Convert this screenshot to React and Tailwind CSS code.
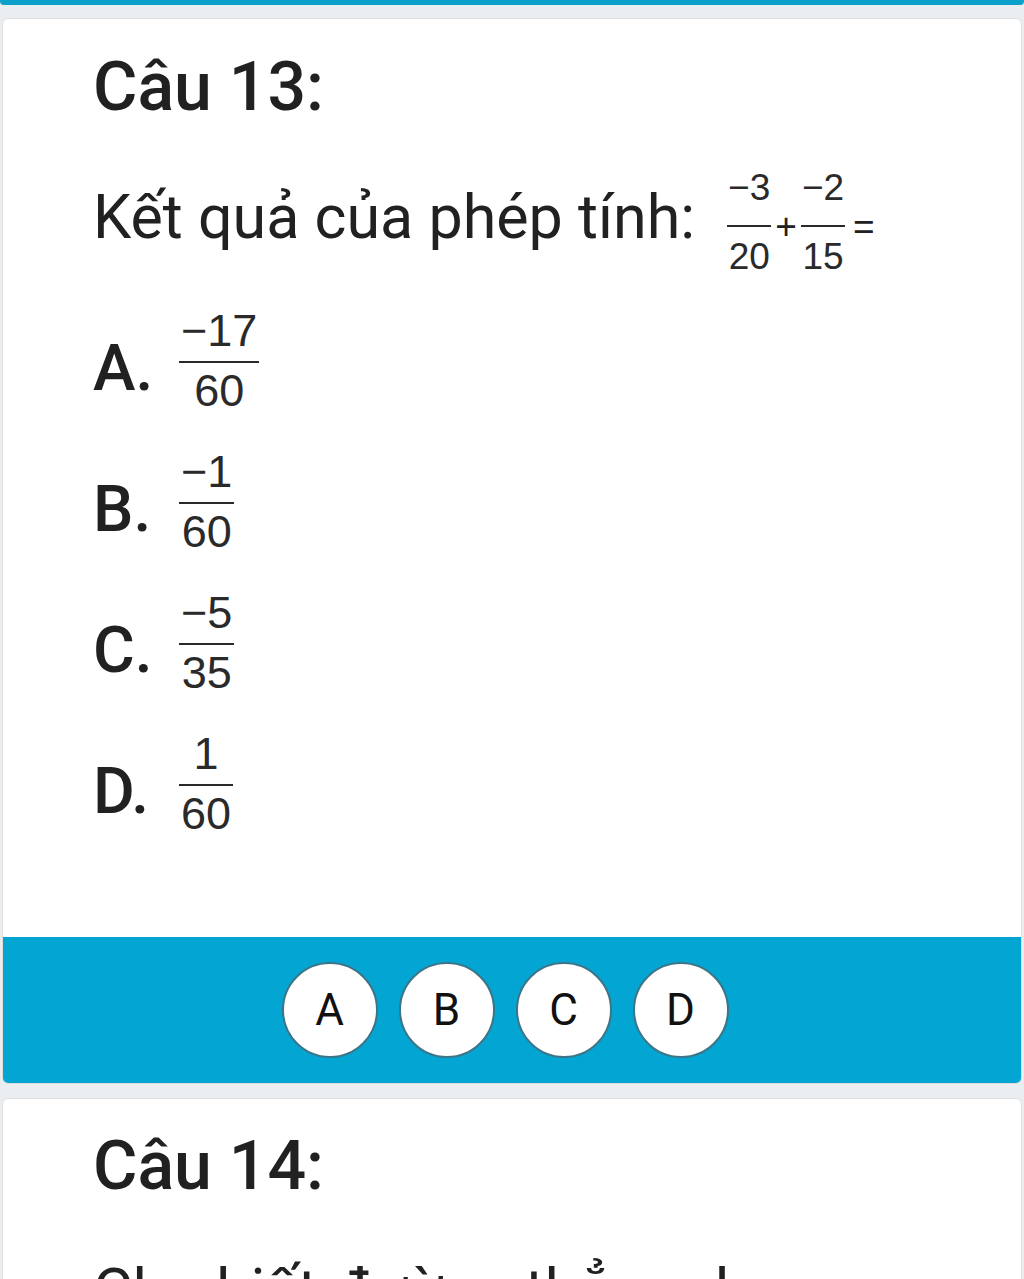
import React from 'react';

const mathFont = { fontFamily: '"Liberation Sans", Arial, sans-serif' };

const Frac = ({ num, den, size = 'sm' }) => {
  const big = size === 'lg';
  return (
    <div className="flex flex-col items-stretch" style={mathFont}>
      <span className={big ? 'text-center text-[45px] leading-none text-[#2a2a2a] px-[2px]' : 'text-center text-[37px] leading-none text-[#2a2a2a] px-[1px]'}>
        {num}
      </span>
      <div className={big ? 'mt-[8px] h-[2px] bg-[#2a2a2a]' : 'mt-[19px] h-[2px] bg-[#2a2a2a]'} />
      <span className={big ? 'mt-[5px] text-center text-[45px] leading-none text-[#2a2a2a] px-[2px]' : 'mt-[11px] text-center text-[37px] leading-none text-[#2a2a2a] px-[1px]'}>
        {den}
      </span>
    </div>
  );
};

const Option = ({ label, num, den }) => (
  <div className="flex items-start">
    <span className="mt-[29px] w-[86px] text-[64px] font-medium leading-none">{label}</span>
    <Frac num={num} den={den} size="lg" />
  </div>
);

const options = [
  { label: 'A.', num: '−17', den: '60' },
  { label: 'B.', num: '−1', den: '60' },
  { label: 'C.', num: '−5', den: '35' },
  { label: 'D.', num: '1', den: '60' },
];

export default function App() {
  return (
    <div className="h-[1279px] overflow-hidden bg-[#eaeef0] text-[#212121]" style={{ fontFamily: 'Roboto, "Noto Sans", sans-serif' }}>
      <div className="h-[5px] rounded-b-[4px] bg-[#0aa0c9]" />

      <div className="mx-[2px] mt-[13px] overflow-hidden rounded-[6px] border border-[#dddddd] bg-white">
        <div className="px-[90px] pt-[34px]">
          <h2 className="text-[68px] font-medium leading-none">Câu 13:</h2>

          <div className="mt-[48px] flex items-start">
            <span className="mt-[18px] text-[61px] leading-none">Kết quả của phép tính:</span>
            <div className="ml-[32px] flex items-start">
              <Frac num="−3" den="20" />
              <span className="mt-[39px] px-[4px] text-[37px] leading-none" style={mathFont}>+</span>
              <Frac num="−2" den="15" />
              <span className="ml-[8px] mt-[39px] text-[37px] leading-none" style={mathFont}>=</span>
            </div>
          </div>

          <div className="mt-[33px] flex flex-col gap-[36px]">
            {options.map((o) => (
              <Option key={o.label} {...o} />
            ))}
          </div>
        </div>

        <div className="mt-[101px] flex h-[146px] items-center justify-center gap-[21px] bg-[#03a6d2] pr-[14px]">
          {['A', 'B', 'C', 'D'].map((l) => (
            <button
              key={l}
              className="flex h-[96px] w-[96px] items-center justify-center rounded-full border-2 border-[#3c7488] bg-white text-[44px] leading-none text-[#111]"
            >
              {l}
            </button>
          ))}
        </div>
      </div>

      <div className="mx-[2px] mt-[14px] rounded-[6px] border border-[#dddddd] bg-white">
        <div className="px-[90px] pt-[33px] pb-[40px]">
          <h2 className="text-[68px] font-medium leading-none">Câu 14:</h2>
          <p className="mt-[61px] text-[61px] leading-none">Cho biết đường thẳng d</p>
        </div>
      </div>
    </div>
  );
}
